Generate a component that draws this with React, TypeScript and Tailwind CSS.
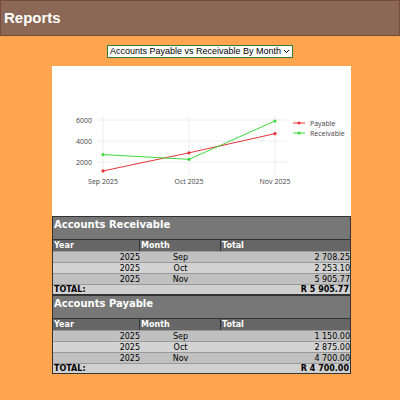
const font = { fontFamily: "Tahoma, 'DejaVu Sans', sans-serif" };

const Chart = () => {
  const xs = [51, 137, 223];
  const y = (v: number) => 54 - (v - 6000) * 0.0105;
  const pay = [1150, 2875, 4700];
  const rec = [2708.25, 2253.1, 5905.77];
  const line = (d: number[]) => d.map((v, i) => `${xs[i]},${y(v)}`).join(" ");
  return (
    <svg width="299" height="150" className="block" style={{ fontFamily: "'Open Sans', sans-serif" }}>
      {[54, 75, 96].map((g) => (
        <line key={g} x1="45" x2="235" y1={g} y2={g} stroke="#eee" />
      ))}
      {xs.map((x) => (
        <line key={x} x1={x} x2={x} y1="50" y2="108" stroke="#eee" />
      ))}
      {[["6000", 54], ["4000", 75], ["2000", 96]].map(([t, g]) => (
        <text key={t} x="40" y={Number(g) + 3} fontSize="7" fill="#444" textAnchor="end">{t}</text>
      ))}
      {["Sep 2025", "Oct 2025", "Nov 2025"].map((t, i) => (
        <text key={t} x={xs[i]} y="118" fontSize="7" fill="#444" textAnchor="middle">{t}</text>
      ))}
      <polyline points={line(pay)} fill="none" stroke="#e8333a" strokeWidth="1" />
      <polyline points={line(rec)} fill="none" stroke="#3fd83a" strokeWidth="1" />
      {pay.map((v, i) => <circle key={i} cx={xs[i]} cy={y(v)} r="1.6" fill="#e8333a" />)}
      {rec.map((v, i) => <circle key={i} cx={xs[i]} cy={y(v)} r="1.6" fill="#3fd83a" />)}
      <line x1="241" x2="253" y1="57" y2="57" stroke="#e8333a" />
      <circle cx="247" cy="57" r="1.6" fill="#e8333a" />
      <text x="258" y="60" fontSize="7" fill="#444">Payable</text>
      <line x1="241" x2="253" y1="67" y2="67" stroke="#3fd83a" />
      <circle cx="247" cy="67" r="1.6" fill="#3fd83a" />
      <text x="258" y="70" fontSize="7" fill="#444">Receivable</text>
    </svg>
  );
};

const Table = ({ title, rows, total }: { title: string; rows: [string, string, string][]; total: string }) => (
  <div className="border border-[#333] text-[8px] leading-none text-black" style={font}>
    <div className="h-[22px] bg-[#777777] text-white font-bold text-[10px] px-[1px] pt-[3px]">{title}</div>
    <div className="grid grid-cols-[87px_81px_1fr] h-[12px] bg-[#666666] text-white font-bold border-t border-[#333]">
      <div className="px-[1px] pt-[2px] border-r border-[#333]">Year</div>
      <div className="px-[1px] pt-[2px] border-r border-[#333]">Month</div>
      <div className="px-[1px] pt-[2px]">Total</div>
    </div>
    {rows.map((r, i) => (
      <div key={i} className={`grid grid-cols-[87px_81px_1fr] h-[11px] border-t border-[#999] ${i % 2 ? "bg-[#d3d3d3]" : "bg-[#c0c0c0]"}`}>
        <div className="text-right pt-[2px]">{r[0]}</div>
        <div className="text-center pt-[2px]">{r[1]}</div>
        <div className="text-right pt-[2px]">{r[2]}</div>
      </div>
    ))}
    <div className="flex justify-between h-[10px] bg-[#d0d0d0] border-t border-[#999] font-bold px-[1px] pt-[1px]">
      <span>TOTAL:</span>
      <span>{total}</span>
    </div>
  </div>
);

export default function App() {
  return (
    <div className="w-[400px] h-[400px] bg-[#ffa54f] overflow-hidden">
      <div className="h-[36px] bg-[#8b6856] border border-[#7a4a3c] flex items-center px-[3px]">
        <h1 className="text-white font-bold text-[15px]" style={{ fontFamily: "'Liberation Sans', Arial, sans-serif" }}>Reports</h1>
      </div>
      <div className="flex justify-center mt-[9px]">
        <div className="h-[13px] bg-white border border-[#2e7d32] flex items-center px-[2px] text-[9px] text-black gap-[2px]" style={{ fontFamily: "'Liberation Sans', Arial, sans-serif" }}>
          Accounts Payable vs Receivable By Month
          <svg width="7" height="5" viewBox="0 0 7 5"><path d="M1 1l2.5 2.5L6 1" fill="none" stroke="#000" /></svg>
        </div>
      </div>
      <div className="mx-[52px] w-[299px] mt-[8px]">
        <div className="bg-white h-[150px]"><Chart /></div>
        <Table title="Accounts Receivable" rows={[["2025", "Sep", "2 708.25"], ["2025", "Oct", "2 253.10"], ["2025", "Nov", "5 905.77"]]} total="R 5 905.77" />
        <Table title="Accounts Payable" rows={[["2025", "Sep", "1 150.00"], ["2025", "Oct", "2 875.00"], ["2025", "Nov", "4 700.00"]]} total="R 4 700.00" />
      </div>
    </div>
  );
}
